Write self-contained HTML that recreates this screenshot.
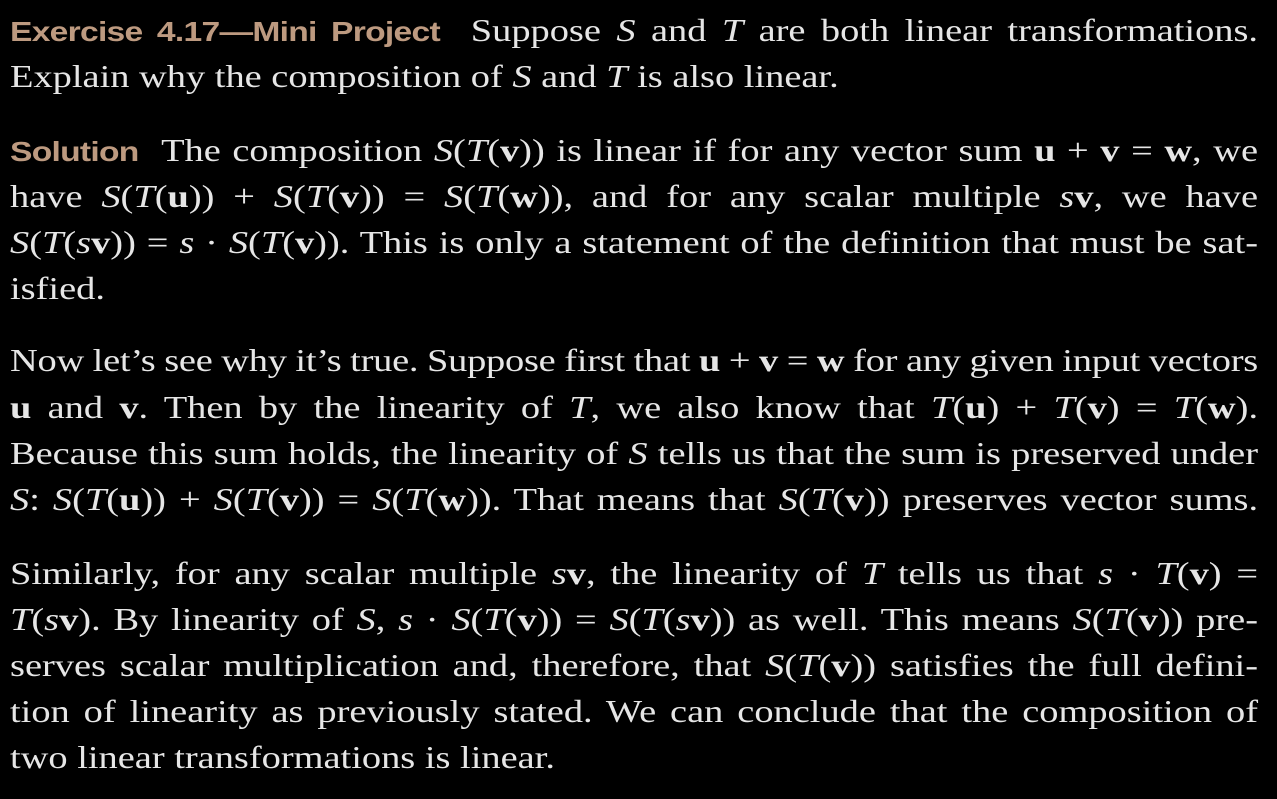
<!DOCTYPE html>
<html><head><meta charset="utf-8"><style>
body{margin:0;background:#000;width:1277px;height:799px;overflow:hidden;}
.l{position:absolute;left:10px;width:1040px;height:46px;line-height:46px;font-family:"Liberation Serif",serif;font-size:32px;color:#e6e6e6;white-space:nowrap;transform:scaleX(1.2);transform-origin:0 0;}
.j{text-align:justify;text-align-last:justify;white-space:normal;}
.h{font-family:"Liberation Sans",sans-serif;font-weight:bold;color:#bd9a80;font-size:28px;letter-spacing:-0.6px;white-space:nowrap;}
i{font-style:italic}
</style></head><body>
<div class="l j" style="top:7px"><span class="h">Exercise&nbsp;4.17—Mini&nbsp;Project</span>&nbsp; Suppose <i>S</i> and <i>T</i> are both linear transformations.</div>
<div class="l" style="top:53px">Explain why the composition of <i>S</i> and <i>T</i> is also linear.</div>
<div class="l j" style="top:127px"><span class="h">Solution</span>&nbsp; The composition <i>S</i>(<i>T</i>(<b>v</b>)) is linear if for any vector sum <b>u</b> + <b>v</b> = <b>w</b>, we</div>
<div class="l j" style="top:173px">have <i>S</i>(<i>T</i>(<b>u</b>)) + <i>S</i>(<i>T</i>(<b>v</b>)) = <i>S</i>(<i>T</i>(<b>w</b>)), and for any scalar multiple <i>s</i><b>v</b>, we have</div>
<div class="l j" style="top:219px"><i>S</i>(<i>T</i>(<i>s</i><b>v</b>)) = <i>s</i> · <i>S</i>(<i>T</i>(<b>v</b>)). This is only a statement of the definition that must be sat-</div>
<div class="l" style="top:265px">isfied.</div>
<div class="l j" style="top:337px;word-spacing:-5px;letter-spacing:-0.2px">Now let’s see why it’s true. Suppose first that <b>u</b> + <b>v</b> = <b>w</b> for any given input vectors</div>
<div class="l j" style="top:384px"><b>u</b> and <b>v</b>. Then by the linearity of <i>T</i>, we also know that <i>T</i>(<b>u</b>) + <i>T</i>(<b>v</b>) = <i>T</i>(<b>w</b>).</div>
<div class="l j" style="top:430px">Because this sum holds, the linearity of <i>S</i> tells us that the sum is preserved under</div>
<div class="l j" style="top:476px"><i>S</i>: <i>S</i>(<i>T</i>(<b>u</b>)) + <i>S</i>(<i>T</i>(<b>v</b>)) = <i>S</i>(<i>T</i>(<b>w</b>)). That means that <i>S</i>(<i>T</i>(<b>v</b>)) preserves vector sums.</div>
<div class="l j" style="top:550px">Similarly, for any scalar multiple <i>s</i><b>v</b>, the linearity of <i>T</i> tells us that <i>s</i> · <i>T</i>(<b>v</b>) =</div>
<div class="l j" style="top:596px"><i>T</i>(<i>s</i><b>v</b>). By linearity of <i>S</i>, <i>s</i> · <i>S</i>(<i>T</i>(<b>v</b>)) = <i>S</i>(<i>T</i>(<i>s</i><b>v</b>)) as well. This means <i>S</i>(<i>T</i>(<b>v</b>)) pre-</div>
<div class="l j" style="top:642px">serves scalar multiplication and, therefore, that <i>S</i>(<i>T</i>(<b>v</b>)) satisfies the full defini-</div>
<div class="l j" style="top:688px">tion of linearity as previously stated. We can conclude that the composition of</div>
<div class="l" style="top:734px">two linear transformations is linear.</div>
</body></html>
